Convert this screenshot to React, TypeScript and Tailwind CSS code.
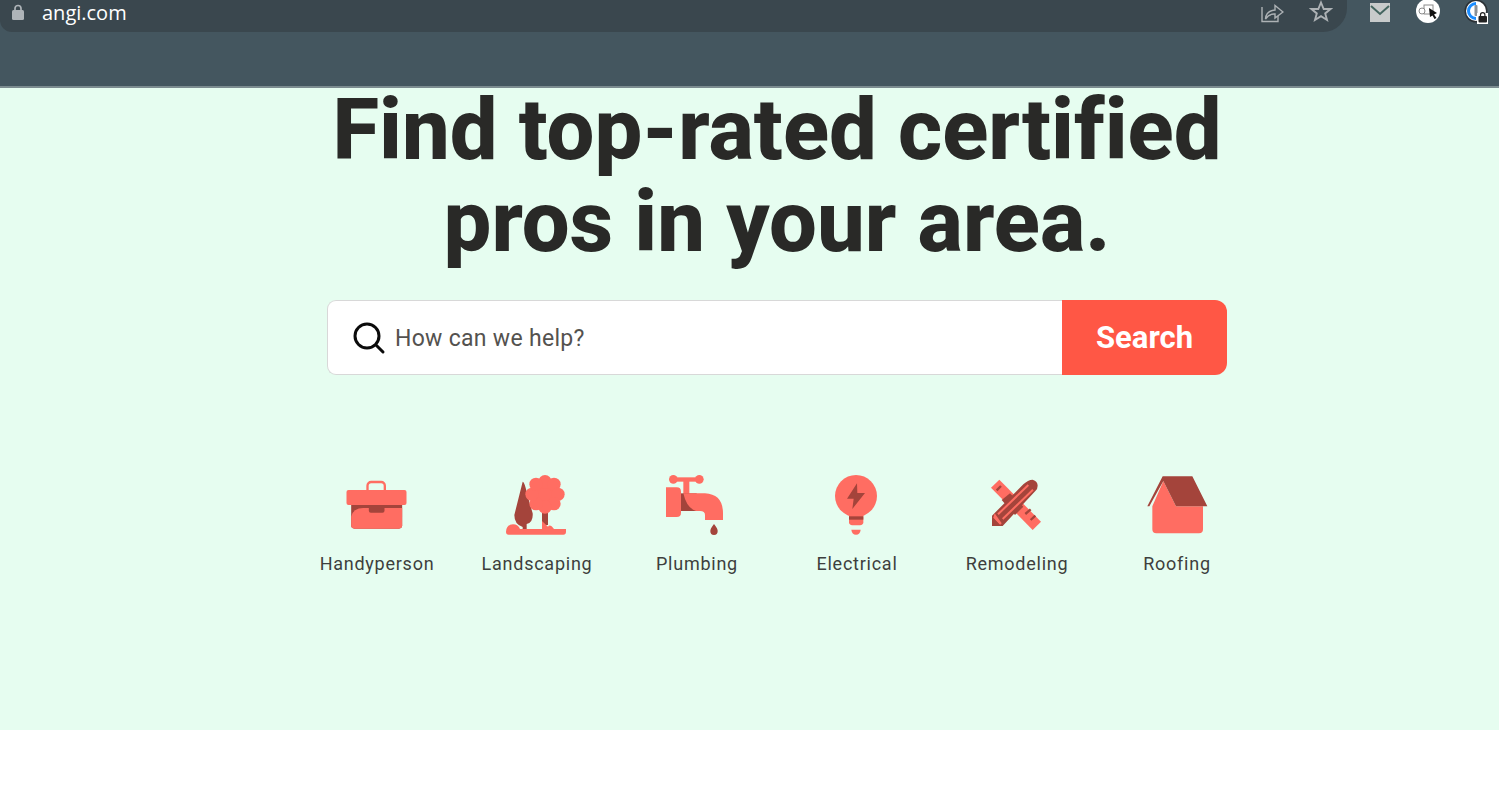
const coral = "#ff6d62";
const dark = "#a4443b";

function Icon({ box, children }: { box: string; children: React.ReactNode }) {
  return (
    <svg width="64" height="64" viewBox={box} className="block">
      {children}
    </svg>
  );
}

const Handy = () => (
  <Icon box="43.5 21 192 192">
    <rect x="111" y="51" width="52" height="40" rx="11" fill="none" stroke={coral} strokeWidth="7" />
    <rect x="62" y="100" width="153" height="91" rx="10" fill={dark} />
    <path d="M62 155Q68 129 98 129H215V181Q215 191 205 191H72Q62 191 62 181Z" fill={coral} />
    <rect x="115" y="110" width="47" height="33" rx="6" fill={dark} />
    <rect x="48" y="75" width="180" height="45" rx="6" fill={coral} />
  </Icon>
);

const Landscaping = () => (
  <Icon box="525 21 192 192">
    <path d="M578 50Q584 50 592 90L608 145Q610 172 590 177V195H578V186Q553 178 553 150Z" fill={dark} />
    <rect x="636" y="130" width="18" height="50" fill={dark} />
    <g fill={coral}>
      <circle cx="645" cy="88" r="42" />
      <circle cx="645" cy="50" r="20" />
      <circle cx="672" cy="58" r="20" />
      <circle cx="684" cy="88" r="20" />
      <circle cx="672" cy="116" r="20" />
      <circle cx="645" cy="126" r="20" />
      <circle cx="618" cy="116" r="20" />
      <circle cx="606" cy="88" r="20" />
      <circle cx="618" cy="58" r="20" />
      <path d="M528 200Q530 178 549 178Q565 178 570 192H636V168L654 185Q660 176 672 192H708V200Q708 209 700 209H536Q528 209 528 200Z" />
    </g>
  </Icon>
);

const Plumbing = () => (
  <Icon box="45 21 192 192">
    <g fill={coral}>
      <circle cx="70" cy="43" r="13" />
      <circle cx="148" cy="43" r="13" />
      <rect x="70" y="37" width="78" height="13" />
      <rect x="100" y="43" width="18" height="50" />
    </g>
    <rect x="90" y="85" width="50" height="53" fill={dark} />
    <path d="M100 85H165Q219 88 219 145V165H165V150Q165 138 150 138H138Q110 130 100 85Z" fill={coral} />
    <path d="M48 67H80Q93 67 93 80V143Q93 156 80 156H48Z" fill={coral} />
    <path d="M192 177Q204 192 203 199A11 11 0 0 1 181 199Q180 192 192 177Z" fill={dark} />
  </Icon>
);

const Electrical = () => (
  <Icon box="525 21 192 192">
    <circle cx="618" cy="93" r="63" fill={coral} />
    <path d="M597 150H640V172Q640 180 630 181H607Q597 180 597 172Z" fill={coral} />
    <rect x="597" y="154" width="43" height="10" fill={dark} />
    <path d="M604 194H632Q630 209 618 209Q606 209 604 194Z" fill={coral} />
    <path d="M621 55L591 101H611L607 132L645 84H622Z" fill={dark} />
  </Icon>
);

const Remodeling = () => (
  <Icon box="75 21 192 192">
    <path d="M93 68L118 44L243 170L218 195Z" fill={coral} />
    <g stroke={dark} strokeWidth="7">
      <path d="M110 76L123 63" />
      <path d="M196 147L212 133" />
      <path d="M212 165L226 152" />
    </g>
    <path d="M125 105L150 85L190 125L165 150Z" fill={dark} />
    <path d="M96 152L190 58Q204 44 218 44Q233 48 233 62Q233 72 226 78L128 183H96Z" fill={dark} />
    <g stroke={coral} strokeWidth="6">
      <path d="M114 148L205 60" />
      <path d="M128 162L219 74" />
    </g>
    <path d="M104 145L125 175L120 180L100 158Z" fill={coral} />
    <path d="M96 156L123 183H96Z" fill={dark} />
  </Icon>
);

const Roofing = () => (
  <Icon box="555 21 192 192">
    <path d="M577 124L610 48L648 124H729V193Q729 205 717 205H589Q577 205 577 193Z" fill={coral} />
    <path d="M562 124L608 34H697L742 124H648L610 48L568 124Z" fill={dark} />
  </Icon>
);

const items = [
  { label: "Handyperson", icon: <Handy /> },
  { label: "Landscaping", icon: <Landscaping /> },
  { label: "Plumbing", icon: <Plumbing /> },
  { label: "Electrical", icon: <Electrical /> },
  { label: "Remodeling", icon: <Remodeling /> },
  { label: "Roofing", icon: <Roofing /> },
];

function Toolbar() {
  return (
    <header className="h-[88px] bg-[#44565f] border-b-2 border-[#7c8c90] flex items-start" style={{ fontFamily: "'Open Sans', sans-serif" }}>
      <div className="w-[1347px] h-[32px] bg-[#3a474e] rounded-br-[24px] rounded-bl-[12px] flex items-start pl-[12px] pr-[14px]">
        <svg width="12" height="17" viewBox="0 0 12 17" className="mt-[3px]">
          <path d="M3 8V5.5a3 3 0 0 1 6 0V8" fill="none" stroke="#aeb4b8" strokeWidth="1.7" />
          <rect x="0" y="7" width="12" height="10" rx="1.5" fill="#aeb4b8" />
        </svg>
        <span className="ml-[18px] text-[20px] leading-[26px] text-white">angi.com</span>
        <div className="ml-auto flex items-start gap-[26px]">
          <svg width="24" height="24" viewBox="0 0 24 24" fill="none" stroke="#adb2b5" strokeWidth="1.4" className="ml-[1px]">
            <path d="M2 7V21.500H18V16" />
            <path d="M5.500 19Q6 11 15 10V5.500L23 12L15 18V14Q9 13.500 5.500 19Z" />
          </svg>
          <svg width="24" height="24" viewBox="0 0 24 24" fill="none" stroke="#adb2b5" strokeWidth="1.9" className="-ml-[1px]">
            <path d="M12 2.500L14.700 9H21.500L16.200 13.400L18 20L12 16.200L6 20L7.800 13.400L2.500 9H9.300Z" />
          </svg>
        </div>
      </div>
      <div className="flex-1 flex items-start pl-[23px]">
        <svg width="20" height="19" viewBox="0 0 20 19" className="mt-[3px]">
          <rect width="20" height="19" fill="#c8cbcb" />
          <path d="M1 3L10 11L19 3" fill="none" stroke="#44655f" strokeWidth="2" />
        </svg>
        <svg width="24" height="24" viewBox="0 0 24 24" className="ml-[26px]">
          <circle cx="12" cy="11" r="12" fill="#fff" />
          <rect x="8" y="5" width="9" height="9" fill="none" stroke="#8a8a8a" strokeWidth="1" />
          <circle cx="6" cy="11" r="3" fill="#fff" stroke="#8a8a8a" strokeWidth="1" />
          <path d="M13 8L21 13L18 14.500L20.500 18L18.500 19L16.500 15.500L14 17Z" fill="#111" />
        </svg>
        <svg width="24" height="24" viewBox="0 0 24 24" className="ml-[24px]">
          <circle cx="12" cy="11" r="11.500" fill="#2b3136" />
          <circle cx="12" cy="11" r="10" fill="#fff" />
          <path d="M12 3.500A7.500 7.500 0 1 0 12 18.500" fill="none" stroke="#1a8cff" strokeWidth="3" />
          <rect x="10.500" y="5" width="3" height="11" rx="1" fill="#8a9096" />
          <rect x="13" y="13" width="11" height="11" fill="#fff" />
          <rect x="14.500" y="16" width="8.500" height="6.500" rx="1" fill="#222" />
          <path d="M16.500 16V14.800a2.200 2.200 0 0 1 4.400 0V16" fill="none" stroke="#222" strokeWidth="1.2" />
        </svg>
      </div>
    </header>
  );
}

export default function App() {
  return (
    <div className="min-h-[799px] bg-white overflow-hidden">
      <Toolbar />
      <main className="h-[642px] bg-[#e6fdf0] pl-[55px] flex flex-col items-center" style={{ fontFamily: "Roboto, sans-serif" }}>
        <h1 className="-mt-[4px] text-center text-[#292927] text-[85px] leading-[92px] font-extrabold whitespace-nowrap [font-variant-ligatures:none]">
          Find top-rated certified
          <br />
          pros in your area.
        </h1>
        <div className="mt-[32px] w-[900px] h-[75px] flex">
          <div className="flex-1 flex items-center pl-[24px] gap-[9px] bg-white rounded-l-[9px] border border-r-0 border-[#d8d8d8]">
            <svg width="34" height="34" viewBox="0 0 34 34" fill="none" stroke="#0b0b0b" strokeWidth="3" strokeLinecap="round">
              <circle cx="15" cy="15" r="12" />
              <path d="M24 24L31 31" />
            </svg>
            <span className="mt-[2px] text-[23px] leading-[30px] text-[#54524f] tracking-[0.3px]">How can we help?</span>
          </div>
          <div className="w-[165px] bg-[#ff5745] rounded-r-[12px] flex items-center justify-center pt-[1px] text-white text-[31px] font-bold">
            Search
          </div>
        </div>
        <div className="mt-[97px] w-[960px] grid grid-cols-6">
          {items.map((it) => (
            <div key={it.label} className="flex flex-col items-center">
              {it.icon}
              <div className="mt-[16px] text-[18px] leading-[24px] text-[#3d3f3d] tracking-[0.75px]">{it.label}</div>
            </div>
          ))}
        </div>
      </main>
    </div>
  );
}
